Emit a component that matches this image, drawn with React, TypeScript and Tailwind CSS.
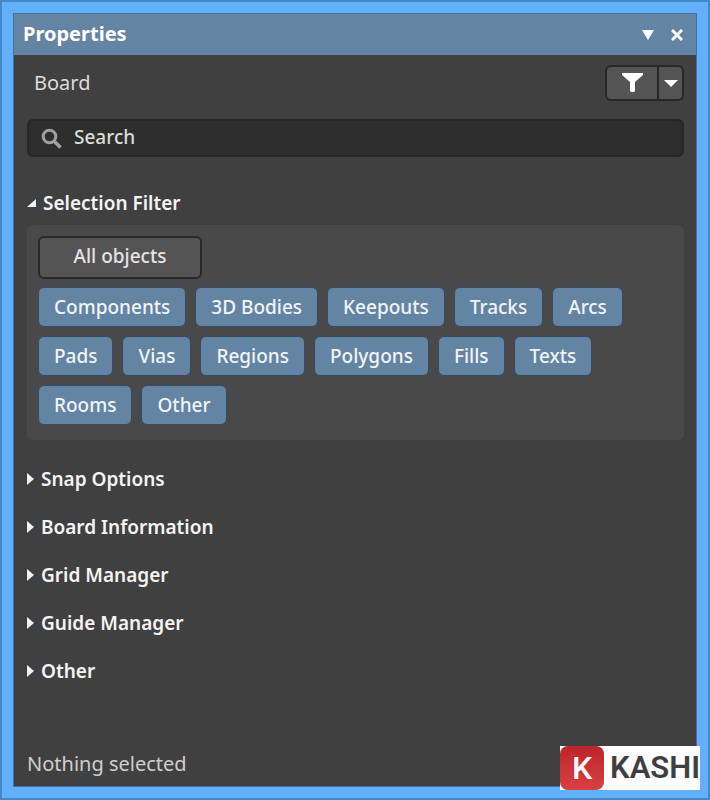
const filters = [
  ["Components", "3D Bodies", "Keepouts", "Tracks", "Arcs"],
  ["Pads", "Vias", "Regions", "Polygons", "Fills", "Texts"],
  ["Rooms", "Other"],
];

const sections = [
  "Snap Options",
  "Board Information",
  "Grid Manager",
  "Guide Manager",
  "Other",
];

const sectionClass =
  "flex items-center text-left text-[19px] leading-7 font-semibold text-[#f4f4f4]";

function TitleBar() {
  return (
    <header className="flex h-[41px] items-center justify-between bg-[#6384a3] pr-[13px] pb-[2px] pl-[9px] text-white">
      <h1 className="text-xl leading-7 font-bold">Properties</h1>
      <div className="flex items-center gap-[17px] pt-[2px]">
        <button type="button" aria-label="Panel menu">
          <svg className="h-[10px] w-3" viewBox="0 0 12 10" fill="currentColor" aria-hidden>
            <path d="M0 0h12L6 10z" />
          </svg>
        </button>
        <button type="button" aria-label="Close panel">
          <svg
            className="h-3 w-3"
            viewBox="0 0 12 12"
            fill="none"
            stroke="currentColor"
            strokeWidth="3"
            aria-hidden
          >
            <path d="M1 1l10 10M11 1L1 11" />
          </svg>
        </button>
      </div>
    </header>
  );
}

function FilterButton() {
  return (
    <div className="flex h-9 overflow-hidden rounded-md border-2 border-[#272727] bg-[#545454] text-white">
      <button
        type="button"
        aria-label="Filter"
        className="flex w-[50px] items-center justify-center"
      >
        <svg className="h-5 w-[21px]" viewBox="0 0 21 20" fill="currentColor" aria-hidden>
          <path d="M0 0h21v2l-8 7v9l-1 1H9l-1-1V9L0 2z" />
        </svg>
      </button>
      <button
        type="button"
        aria-label="Filter options"
        className="flex w-[25px] items-center justify-center border-l-2 border-[#272727]"
      >
        <svg className="h-[7px] w-[14px]" viewBox="0 0 14 7" fill="currentColor" aria-hidden>
          <path d="M0 0h14L7 7z" />
        </svg>
      </button>
    </div>
  );
}

function SearchBox() {
  return (
    <label className="mt-[18px] flex h-[38px] items-center gap-3 rounded-md border-2 border-[#262626] bg-[#2e2e2e] pl-3">
      <svg
        className="h-[21px] w-[21px] shrink-0 text-[#a0a0a0]"
        viewBox="0 0 21 21"
        fill="none"
        stroke="currentColor"
        aria-hidden
      >
        <circle cx="8.5" cy="8.5" r="6.3" strokeWidth="3" />
        <path d="M13 13l6.5 6.5" strokeWidth="3.6" />
      </svg>
      <input
        type="text"
        aria-label="Search"
        placeholder="Search"
        className="min-w-0 flex-1 bg-transparent pb-[2px] text-[19px] leading-7 font-medium text-[#dcdcdc] outline-none placeholder:text-[#dcdcdc]"
      />
    </label>
  );
}

function SelectionFilter() {
  return (
    <section className="mt-8">
      <button type="button" aria-expanded className={`${sectionClass} gap-[6px]`}>
        <svg className="h-[10px] w-[10px]" viewBox="0 0 10 10" fill="currentColor" aria-hidden>
          <path d="M9 1v8H0z" />
        </svg>
        Selection Filter
      </button>
      <div className="mt-2 rounded-md bg-[#494949] px-[11px] pt-[11px] pb-[15px]">
        <button
          type="button"
          className="h-[43px] w-[164px] rounded-md border-2 border-[#2a2a2a] bg-[#545454] pb-[3px] text-[19px] leading-7 font-medium text-[#e4e4e4]"
        >
          All objects
        </button>
        <div className="mt-2 flex flex-col gap-[9px]">
          {filters.map((row) => (
            <div key={row[0]} className="flex gap-[9px]">
              {row.map((name) => (
                <button
                  key={name}
                  type="button"
                  className="h-10 rounded-md border border-[#364a60] bg-[#6384a3] px-[15px] text-[19px] leading-7 font-medium text-[#f0f4f8]"
                >
                  {name}
                </button>
              ))}
            </div>
          ))}
        </div>
      </div>
    </section>
  );
}

function Watermark() {
  return (
    <div className="absolute right-2 bottom-2 flex h-11 w-[140px] items-center gap-[6px] overflow-hidden bg-white font-[Roboto,sans-serif]">
      <span className="flex h-11 w-11 shrink-0 items-center justify-center rounded-lg bg-linear-to-b from-[#bd242b] to-[#d84043] text-[32px] leading-none font-medium text-white">
        K
      </span>
      <span className="text-[31px] leading-8 font-semibold text-[#3f3f3f]">KASHI</span>
    </div>
  );
}

export default function App() {
  return (
    <div className="relative flex min-h-screen flex-col border-2 border-[#4588c4] bg-[#62b0fb] p-[11px] font-['Noto_Sans','Open_Sans',sans-serif]">
      <main className="flex flex-1 flex-col border border-[#41729e] bg-[#404040]">
        <TitleBar />
        <div className="flex flex-1 flex-col pt-[10px] pr-3 pl-[13px]">
          <div className="flex items-center justify-between pl-[7px]">
            <h2 className="text-xl leading-7 text-[#dcdcdc]">Board</h2>
            <FilterButton />
          </div>
          <SearchBox />
          <SelectionFilter />
          <div className="mt-[25px] flex flex-col items-start gap-5">
            {sections.map((title) => (
              <button
                key={title}
                type="button"
                aria-expanded={false}
                className={`${sectionClass} gap-[7px]`}
              >
                <svg className="h-3 w-[7px]" viewBox="0 0 7 12" fill="currentColor" aria-hidden>
                  <path d="M0 0l7 6-7 6z" />
                </svg>
                {title}
              </button>
            ))}
          </div>
          <footer className="mt-auto pb-2 text-xl leading-7 text-[#cfcfcf]">
            Nothing selected
          </footer>
        </div>
      </main>
      <Watermark />
    </div>
  );
}
